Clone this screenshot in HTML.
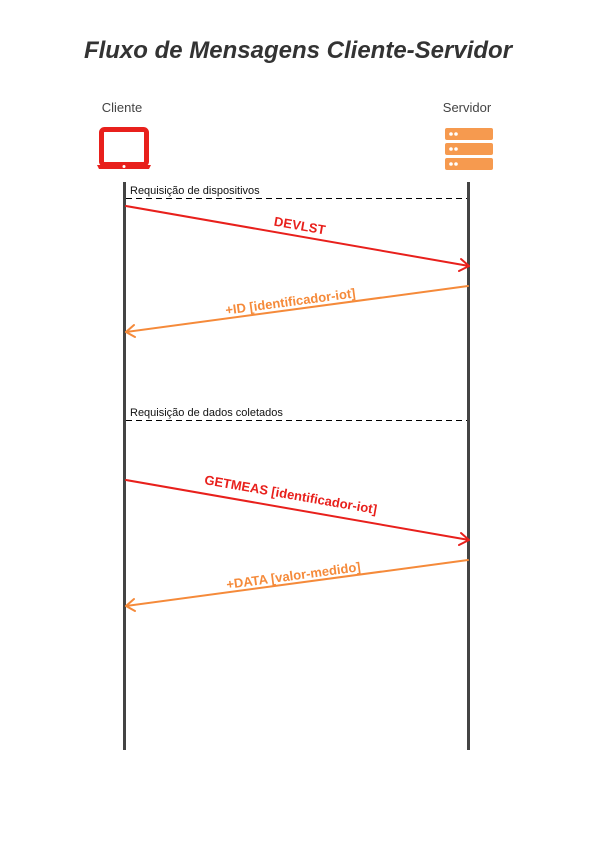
<!DOCTYPE html>
<html><head><meta charset="utf-8"><style>
body{margin:0;background:#fff;width:595px;height:842px;overflow:hidden;font-family:"Liberation Sans",sans-serif}
</style></head><body>
<svg width="595" height="842" xmlns="http://www.w3.org/2000/svg" font-family="Liberation Sans, sans-serif">
<text x="298" y="58" text-anchor="middle" font-size="24" font-weight="bold" font-style="italic" fill="#333">Fluxo de Mensagens Cliente-Servidor</text>
<text x="122" y="112" text-anchor="middle" font-size="13" fill="#444">Cliente</text>
<text x="467" y="112" text-anchor="middle" font-size="13" fill="#444">Servidor</text>
<rect x="101.5" y="129.5" width="45" height="35" rx="3" fill="none" stroke="#e8201c" stroke-width="5"/>
<path d="M97 165 H151 L149 169 H99 Z" fill="#e8201c"/>
<circle cx="124" cy="166.5" r="1.5" fill="#fff"/>
<g fill="#f69a4f">
<rect x="445" y="128" width="48" height="12" rx="2"/>
<rect x="445" y="143" width="48" height="12" rx="2"/>
<rect x="445" y="158" width="48" height="12" rx="2"/>
</g>
<g fill="#fff">
<circle cx="451" cy="134" r="1.8"/><circle cx="456" cy="134" r="1.8"/>
<circle cx="451" cy="149" r="1.8"/><circle cx="456" cy="149" r="1.8"/>
<circle cx="451" cy="164" r="1.8"/><circle cx="456" cy="164" r="1.8"/>
</g>
<line x1="124.5" y1="182" x2="124.5" y2="750" stroke="#444" stroke-width="3"/>
<line x1="468.5" y1="182" x2="468.5" y2="750" stroke="#444" stroke-width="3"/>
<line x1="126" y1="198.5" x2="467" y2="198.5" stroke="#000" stroke-width="1" stroke-dasharray="6,4"/>
<text x="130" y="194" font-size="11" fill="#111">Requisição de dispositivos</text>
<line x1="126" y1="420.5" x2="467" y2="420.5" stroke="#000" stroke-width="1" stroke-dasharray="6,4"/>
<text x="130" y="416" font-size="11" fill="#111">Requisição de dados coletados</text>
<g fill="none" stroke-width="2" stroke-linecap="round" stroke-linejoin="round">
<line x1="126" y1="206" x2="469" y2="266" stroke="#e8201c"/>
<path d="M461 259 L469 266 L459 271" stroke="#e8201c"/>
<line x1="468" y1="286" x2="126" y2="332" stroke="#f58a3a"/>
<path d="M134 325 L126 332 L135 337" stroke="#f58a3a"/>
<line x1="126" y1="480" x2="469" y2="540" stroke="#e8201c"/>
<path d="M461 533 L469 540 L459 545" stroke="#e8201c"/>
<line x1="468" y1="560" x2="126" y2="606" stroke="#f58a3a"/>
<path d="M134 599 L126 606 L135 611" stroke="#f58a3a"/>
</g>
<g font-size="13" font-weight="bold" text-anchor="middle">
<text transform="translate(299,230) rotate(9.9)" fill="#e8201c" textLength="52">DEVLST</text>
<text transform="translate(291,306) rotate(-7.6)" fill="#f58a3a">+ID [identificador-iot]</text>
<text transform="translate(290,499) rotate(9.9)" fill="#e8201c">GETMEAS [identificador-iot]</text>
<text transform="translate(294,580) rotate(-7.6)" fill="#f58a3a">+DATA [valor-medido]</text>
</g>
</svg>
</body></html>
